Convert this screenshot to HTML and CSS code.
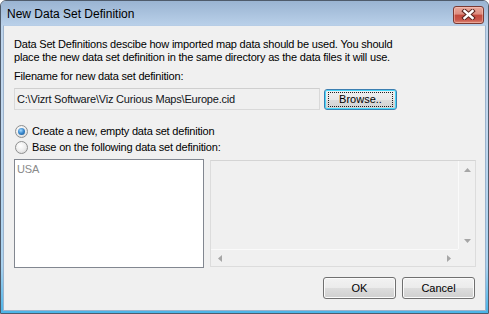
FILE: index.html
```html
<!DOCTYPE html>
<html>
<head>
<meta charset="utf-8">
<link rel="stylesheet" href="styles.css">
</head>
<body>
<div class="window">
  <div class="titlebar">
    <span class="title">New Data Set Definition</span>
    <div class="close">
      <svg width="15" height="11" viewBox="0 0 15 11">
        <path d="M3.5 2 L11.5 9 M11.5 2 L3.5 9" stroke="#5a2620" stroke-width="4.4" stroke-linecap="square" fill="none"/>
        <path d="M3.5 2 L11.5 9 M11.5 2 L3.5 9" stroke="#ffffff" stroke-width="2.4" stroke-linecap="square" fill="none"/>
      </svg>
    </div>
  </div>
  <div class="frame">
    <div class="client">
      <p class="intro">Data Set Definitions descibe how imported map data should be used. You should<br>place the new data set definition in the same directory as the data files it will use.</p>
      <div class="label">Filename for new data set definition:</div>
      <div class="file-row">
        <div class="edit">C:\Vizrt Software\Viz Curious Maps\Europe.cid</div>
        <div class="btn default"><span class="focus">Browse..</span></div>
      </div>
      <div class="radio-row first"><span class="radio checked"></span><span>Create a new, empty data set definition</span></div>
      <div class="radio-row"><span class="radio"></span><span>Base on the following data set definition:</span></div>
      <div class="lists">
        <div class="listbox"><div class="item">USA</div></div>
        <div class="panel">
          <div class="panel-main">
            <div class="view"></div>
            <div class="vscroll">
              <svg width="7" height="4" viewBox="0 0 7 4"><path d="M0 4 L3.5 0 L7 4 Z" fill="#a6a6a6"/></svg>
              <svg width="7" height="4" viewBox="0 0 7 4"><path d="M0 0 L3.5 4 L7 0 Z" fill="#a6a6a6"/></svg>
            </div>
          </div>
          <div class="panel-bottom">
            <div class="hscroll">
              <svg width="4" height="7" viewBox="0 0 4 7"><path d="M4 0 L0 3.5 L4 7 Z" fill="#a6a6a6"/></svg>
              <svg width="4" height="7" viewBox="0 0 4 7"><path d="M0 0 L4 3.5 L0 7 Z" fill="#a6a6a6"/></svg>
            </div>
            <div class="corner"></div>
          </div>
        </div>
      </div>
      <div class="buttons">
        <div class="btn">OK</div>
        <div class="btn">Cancel</div>
      </div>
    </div>
  </div>
</div>
</body>
</html>
```

FILE: styles.css
```css
html, body {
  margin: 0;
  padding: 0;
  background: #ffffff;
}
body {
  font-family: "Liberation Sans", Arial, sans-serif;
  color: #000;
}
.window {
  width: 489px;
  height: 314px;
  box-sizing: border-box;
  border: 1px solid #4f5b6b;
  border-radius: 6px 6px 0 0;
  background: linear-gradient(to bottom, #bcd3eb 0, #c2d8ee 40%, #a9d2ef 85%, #4ab4e8 100%);
  display: flex;
  flex-direction: column;
  overflow: hidden;
}
.titlebar {
  height: 24px;
  flex: none;
  display: flex;
  align-items: center;
  justify-content: space-between;
  padding: 0 4px 0 6px;
  background: linear-gradient(to bottom, #9ab4d2, #b9d0e9);
}
.title {
  font-size: 12px;
  padding-top: 1px;
}
.close {
  width: 29px;
  height: 16px;
  margin-top: 3px;
  border: 1px solid #7a3a33;
  border-radius: 3px;
  background: linear-gradient(to bottom, #e9a99c 0%, #dc8c7f 45%, #c2493c 50%, #c9564a 80%, #dc8a78 100%);
  display: flex;
  align-items: center;
  justify-content: center;
  box-shadow: inset 0 0 0 1px rgba(255, 210, 200, 0.45);
}
.frame {
  flex: 1;
  display: flex;
  padding: 0 2px 2px 2px;
}
.client {
  flex: 1;
  background: #f0f0f0;
  border: 1px solid #9db3cc;
  border-top-color: #b7cde6;
  padding: 12px 9px 0 10px;
  font-size: 11px;
  line-height: 13px;
  letter-spacing: -0.2px;
}
.intro {
  margin: 0;
}
.label {
  margin-top: 6px;
}
.file-row {
  display: flex;
  align-items: center;
  gap: 4px;
  margin-top: 5px;
}
.edit {
  width: 306px;
  height: 22px;
  box-sizing: border-box;
  border: 1px solid #d9d9d9;
  border-top-color: #cfcfcf;
  background: #f0f0f0;
  padding: 4px 0 0 2px;
  color: #101418;
  white-space: nowrap;
}
.btn {
  width: 73px;
  height: 22px;
  box-sizing: border-box;
  border: 1px solid #707070;
  border-radius: 3px;
  background: linear-gradient(to bottom, #f2f2f2 0%, #ebebeb 50%, #dddddd 51%, #cfcfcf 100%);
  box-shadow: inset 0 0 0 1px #fbfbfb;
  display: flex;
  align-items: center;
  justify-content: center;
  letter-spacing: 0;
}
.btn.default {
  height: 21px;
  border-color: #3c7fb1;
  box-shadow: inset 0 0 0 1px #48d8fb;
  background: linear-gradient(to bottom, #f0f0f0 0%, #e8e8e8 50%, #dcdcdc 51%, #d2d2d2 100%);
}
.focus {
  display: flex;
  align-items: center;
  justify-content: center;
  width: 65px;
  height: 15px;
  box-sizing: border-box;
  border: 1px dotted #202020;
}
.radio-row {
  display: flex;
  align-items: center;
  height: 16px;
  gap: 4px;
}
.radio-row.first {
  margin-top: 13px;
}
.radio {
  width: 13px;
  height: 13px;
  box-sizing: border-box;
  border-radius: 50%;
  border: 1px solid #8e8f8f;
  background: radial-gradient(circle at 40% 35%, #ffffff 0%, #eeeeee 50%, #cfcfcf 100%);
  display: flex;
  align-items: center;
  justify-content: center;
  margin-left: 1px;
}
.radio.checked::after {
  content: "";
  width: 7px;
  height: 7px;
  border-radius: 50%;
  background: radial-gradient(circle at 40% 35%, #a7dbff 0%, #3e8cd0 45%, #134d85 100%);
}
.lists {
  display: flex;
  align-items: flex-start;
  gap: 6px;
  margin-top: 4px;
}
.listbox {
  width: 190px;
  height: 109px;
  box-sizing: border-box;
  border: 1px solid #828790;
  background: #ffffff;
  padding: 3px 2px;
  color: #8a8a8a;
}
.panel {
  width: 266px;
  height: 107px;
  margin-top: 1px;
  box-sizing: border-box;
  border: 1px solid #dcdcdc;
  border-top-color: #d4d4d4;
  background: #f0f0f0;
  display: flex;
  flex-direction: column;
}
.panel-main {
  flex: 1;
  display: flex;
}
.view {
  flex: 1;
}
.vscroll {
  width: 17px;
  display: flex;
  flex-direction: column;
  justify-content: space-between;
  align-items: center;
  padding: 7px 0 6px;
  border-left: 1px solid #fafafa;
  box-sizing: border-box;
}
.panel-bottom {
  height: 17px;
  display: flex;
}
.hscroll {
  flex: 1;
  display: flex;
  align-items: center;
  justify-content: space-between;
  padding: 0 7px;
  border-top: 1px solid #fafafa;
}
.corner {
  width: 17px;
}
.buttons {
  display: flex;
  justify-content: flex-end;
  gap: 6px;
  margin-top: 9px;
  padding-right: 1px;
}
```
